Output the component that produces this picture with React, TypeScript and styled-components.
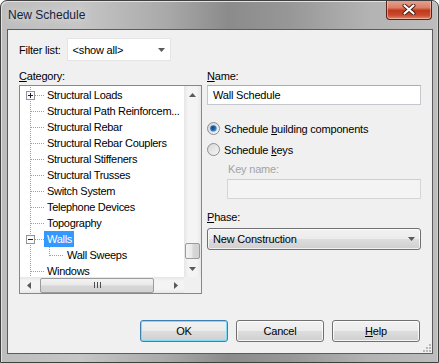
import React from 'react';
import styled, { createGlobalStyle, css } from 'styled-components';

const GlobalStyle = createGlobalStyle`
  html, body {
    margin: 0;
    padding: 0;
    background: #ffffff;
  }
  body {
    font-family: "Liberation Sans", Arial, sans-serif;
    font-size: 11px;
    letter-spacing: -0.2px;
    color: #000;
  }
`;

const Window = styled.div`
  width: 439px;
  height: 363px;
  box-sizing: border-box;
  border: 1px solid #404040;
  border-radius: 7px 7px 0 0;
  background: linear-gradient(
    90deg,
    #bdbdbd 0%,
    #c6c6c6 18%,
    #a9a9a9 38%,
    #8b8b8b 52%,
    #979797 66%,
    #b3b3b3 84%,
    #bdbdbd 100%
  );
  box-shadow: inset 1px 1px 0 #e2e2e2, inset -1px 0 0 #d0d0d0;
  display: flex;
  flex-direction: column;
  overflow: hidden;
`;

const TitleBar = styled.div`
  height: 28px;
  flex: none;
  display: flex;
  align-items: flex-start;
  padding-left: 7px;
`;

const Title = styled.div`
  font-size: 12px;
  line-height: 14px;
  letter-spacing: 0;
  margin-top: 7px;
  color: #14233d;
  text-shadow: 0 0 8px rgba(255, 255, 255, 0.8);
`;

const CloseButton = styled.div`
  margin-left: auto;
  margin-right: 6px;
  margin-top: -1px;
  width: 46px;
  height: 20px;
  box-sizing: border-box;
  border: 1px solid #5a2318;
  border-top: none;
  border-radius: 0 0 4px 4px;
  background: linear-gradient(180deg, #e9a595 0%, #d98066 40%, #c0391f 55%, #c94a2c 80%, #e0896b 100%);
  box-shadow: inset 0 0 0 1px rgba(255, 220, 210, 0.5);
  display: flex;
  align-items: center;
  justify-content: center;
`;

const Client = styled.div`
  flex: 1;
  margin: 0 5px 8px 6px;
  border: 1px solid #5c5c5c;
  background: #f0f0f0;
  display: flex;
  flex-direction: column;
  padding: 8px 11px 11px 11px;
  position: relative;
`;

const FilterRow = styled.div`
  display: flex;
  align-items: center;
  gap: 6px;
  height: 23px;
`;

const FilterSelect = styled.div`
  width: 104px;
  height: 23px;
  box-sizing: border-box;
  background: #ffffff;
  border: 1px solid #e4e4e4;
  display: flex;
  align-items: center;
  justify-content: space-between;
  padding: 0 5px 0 5px;
`;

const Main = styled.div`
  display: grid;
  grid-template-columns: 183px 214px;
  column-gap: 5px;
  margin-top: 7px;
`;

const Column = styled.div`
  display: flex;
  flex-direction: column;
`;

const Label = styled.div<{ $disabled?: boolean; $indent?: number }>`
  height: 17px;
  line-height: 17px;
  white-space: nowrap;
  color: ${(p) => (p.$disabled ? '#a3a3a3' : '#000')};
  padding-left: ${(p) => p.$indent ?? 0}px;
`;

const ListBox = styled.div`
  height: 209px;
  box-sizing: border-box;
  border: 1px solid #828790;
  background: #ffffff;
  display: grid;
  grid-template-columns: 1fr 17px;
  grid-template-rows: 1fr 16px;
`;

const Tree = styled.div`
  padding-top: 1px;
  overflow: hidden;
  letter-spacing: -0.3px;
`;

const TreeRow = styled.div`
  display: flex;
  align-items: center;
  height: 16px;
  white-space: nowrap;
`;

const ItemText = styled.span<{ $selected?: boolean }>`
  height: 16px;
  line-height: 16px;
  padding: 0 2px 0 3px;
  ${(p) =>
    p.$selected &&
    css`
      background: #3399ff;
      color: #ffffff;
    `}
`;

const VScroll = styled.div`
  display: flex;
  flex-direction: column;
  background: linear-gradient(90deg, #e6e6e6 0%, #f4f4f4 25%, #f4f4f4 75%, #e8e8e8 100%);
`;

const HScroll = styled.div`
  display: flex;
  background: linear-gradient(180deg, #e6e6e6 0%, #f4f4f4 25%, #f4f4f4 75%, #e8e8e8 100%);
`;

const ScrollCorner = styled.div`
  background: #f0f0f0;
`;

const ArrowButton = styled.div<{ $horizontal?: boolean }>`
  flex: none;
  ${(p) => (p.$horizontal ? 'width: 17px;' : 'height: 17px;')}
  display: flex;
  align-items: center;
  justify-content: center;
`;

const Track = styled.div<{ $horizontal?: boolean }>`
  flex: 1;
  display: flex;
  flex-direction: ${(p) => (p.$horizontal ? 'row' : 'column')};
`;

const Thumb = styled.div<{ $horizontal?: boolean; $offset: number; $size: number }>`
  box-sizing: border-box;
  border: 1px solid #9b9b9b;
  border-radius: 2px;
  display: flex;
  align-items: center;
  justify-content: center;
  ${(p) =>
    p.$horizontal
      ? css`
          margin: 0 0 0 ${p.$offset}px;
          width: ${p.$size}px;
          height: 15px;
          align-self: center;
          background: linear-gradient(180deg, #f3f3f3 0%, #e9e9e9 45%, #d6d6d6 55%, #d2d2d2 100%);
        `
      : css`
          margin: ${p.$offset}px 0 0 1px;
          height: ${p.$size}px;
          width: 15px;
          background: linear-gradient(90deg, #f3f3f3 0%, #e9e9e9 45%, #d6d6d6 55%, #d2d2d2 100%);
        `}
`;

const TextBox = styled.div<{ $disabled?: boolean; $indent?: number }>`
  height: 20px;
  box-sizing: border-box;
  margin-left: ${(p) => p.$indent ?? 0}px;
  border: 1px solid ${(p) => (p.$disabled ? '#d5d5d5' : '#c5c7cc')};
  border-top-color: ${(p) => (p.$disabled ? '#cfcfcf' : '#abadb3')};
  background: ${(p) => (p.$disabled ? '#f4f4f4' : '#ffffff')};
  padding-left: 5px;
  line-height: 18px;
`;

const RadioRow = styled.div<{ $gap: number }>`
  display: flex;
  align-items: center;
  gap: 4px;
  height: 17px;
  margin-top: ${(p) => p.$gap}px;
`;

const ComboBox = styled.div`
  height: 22px;
  box-sizing: border-box;
  border: 1px solid #707070;
  border-radius: 3px;
  background: linear-gradient(180deg, #f2f2f2 0%, #ebebeb 50%, #dddddd 51%, #cfcfcf 100%);
  box-shadow: inset 0 0 0 1px rgba(255, 255, 255, 0.7);
  display: flex;
  align-items: center;
  justify-content: space-between;
  padding: 0 5px 0 5px;
`;

const Spacer = styled.div<{ $h: number }>`
  height: ${(p) => p.$h}px;
  flex: none;
`;

const Footer = styled.div`
  margin-top: auto;
  display: flex;
  justify-content: flex-end;
  gap: 8px;
  padding-right: 1px;
`;

const Button = styled.div<{ $default?: boolean }>`
  width: 88px;
  height: 22px;
  box-sizing: border-box;
  border: 1px solid ${(p) => (p.$default ? '#3c7fb1' : '#707070')};
  border-radius: 3px;
  background: linear-gradient(180deg, #f2f2f2 0%, #ebebeb 50%, #dddddd 51%, #cfcfcf 100%);
  box-shadow: inset 0 0 0 1px ${(p) => (p.$default ? '#7fdcf9' : 'rgba(255, 255, 255, 0.8)')};
  display: flex;
  align-items: center;
  justify-content: center;
`;

const Grip = styled.div`
  position: absolute;
  right: 1px;
  bottom: 1px;
  width: 10px;
  height: 10px;
`;

type Expander = 'plus' | 'minus' | undefined;

const Dotted = ({ x1, y1, x2, y2 }: { x1: number; y1: number; x2: number; y2: number }) => (
  <line x1={x1} y1={y1} x2={x2} y2={y2} stroke="#a0a0a0" strokeDasharray="1 1" shapeRendering="crispEdges" />
);

const Guide = ({ level, expander }: { level: number; expander?: Expander }) => (
  <svg width={level === 0 ? 24 : 44} height={16} style={{ flex: 'none' }}>
    <Dotted x1={10.5} y1={0} x2={10.5} y2={16} />
    {level === 0 && <Dotted x1={expander ? 15 : 11} y1={8.5} x2={24} y2={8.5} />}
    {level === 1 && (
      <>
        <Dotted x1={29.5} y1={0} x2={29.5} y2={9} />
        <Dotted x1={30} y1={8.5} x2={44} y2={8.5} />
      </>
    )}
    {expander && (
      <>
        <rect x={6.5} y={4.5} width={8} height={8} fill="#fbfbfb" stroke="#949494" shapeRendering="crispEdges" />
        <line x1={8} y1={8.5} x2={13} y2={8.5} stroke="#1c1c3c" shapeRendering="crispEdges" />
        {expander === 'plus' && <line x1={10.5} y1={6} x2={10.5} y2={11} stroke="#1c1c3c" shapeRendering="crispEdges" />}
      </>
    )}
  </svg>
);

const Arrow = ({ dir }: { dir: 'up' | 'down' | 'left' | 'right' }) => {
  const pts = {
    up: '0,4 3.5,0 7,4',
    down: '0,0 3.5,4 7,0',
    left: '4,0 0,3.5 4,7',
    right: '0,0 4,3.5 0,7',
  }[dir];
  const horiz = dir === 'left' || dir === 'right';
  return (
    <svg width={horiz ? 4 : 7} height={horiz ? 7 : 4}>
      <polygon points={pts} fill="#5a5a5a" />
    </svg>
  );
};

const Radio = ({ checked }: { checked?: boolean }) => (
  <svg width={13} height={13} style={{ flex: 'none' }}>
    <defs>
      <linearGradient id={checked ? 'rg1' : 'rg0'} x1="0" y1="0" x2="1" y2="1">
        <stop offset="0" stopColor="#d4d4d4" />
        <stop offset="1" stopColor="#f8f8f8" />
      </linearGradient>
      <radialGradient id="dot" cx="0.4" cy="0.4" r="0.7">
        <stop offset="0" stopColor="#0e3f75" />
        <stop offset="0.6" stopColor="#2a77c0" />
        <stop offset="1" stopColor="#7cc2ef" />
      </radialGradient>
    </defs>
    <circle cx={6.5} cy={6.5} r={6} fill={`url(#${checked ? 'rg1' : 'rg0'})`} stroke="#8e8f8f" />
    {checked && <circle cx={6.5} cy={6.5} r={3.3} fill="url(#dot)" />}
  </svg>
);

const items: { text: string; level: number; expander?: Expander; selected?: boolean }[] = [
  { text: 'Structural Loads', level: 0, expander: 'plus' },
  { text: 'Structural Path Reinforcem...', level: 0 },
  { text: 'Structural Rebar', level: 0 },
  { text: 'Structural Rebar Couplers', level: 0 },
  { text: 'Structural Stiffeners', level: 0 },
  { text: 'Structural Trusses', level: 0 },
  { text: 'Switch System', level: 0 },
  { text: 'Telephone Devices', level: 0 },
  { text: 'Topography', level: 0 },
  { text: 'Walls', level: 0, expander: 'minus', selected: true },
  { text: 'Wall Sweeps', level: 1 },
  { text: 'Windows', level: 0 },
];

export default function App() {
  return (
    <>
      <GlobalStyle />
      <Window>
        <TitleBar>
          <Title>New Schedule</Title>
          <CloseButton>
            <svg width={14} height={11}>
              <path d="M2.5 1.5 L11.5 9.5 M11.5 1.5 L2.5 9.5" stroke="#4a1a10" strokeWidth={4} strokeLinecap="round" />
              <path d="M2.5 1.5 L11.5 9.5 M11.5 1.5 L2.5 9.5" stroke="#ffffff" strokeWidth={2.2} strokeLinecap="round" />
            </svg>
          </CloseButton>
        </TitleBar>
        <Client>
          <FilterRow>
            <span>Filter list:</span>
            <FilterSelect>
              <span>&lt;show all&gt;</span>
              <Arrow dir="down" />
            </FilterSelect>
          </FilterRow>
          <Main>
            <Column>
              <Label>
                <u>C</u>ategory:
              </Label>
              <ListBox>
                <Tree>
                  {items.map((it) => (
                    <TreeRow key={it.text}>
                      <Guide level={it.level} expander={it.expander} />
                      <ItemText $selected={it.selected}>{it.text}</ItemText>
                    </TreeRow>
                  ))}
                </Tree>
                <VScroll>
                  <ArrowButton>
                    <Arrow dir="up" />
                  </ArrowButton>
                  <Track>
                    <Thumb $offset={140} $size={16} />
                  </Track>
                  <ArrowButton>
                    <Arrow dir="down" />
                  </ArrowButton>
                </VScroll>
                <HScroll>
                  <ArrowButton $horizontal>
                    <Arrow dir="left" />
                  </ArrowButton>
                  <Track $horizontal>
                    <Thumb $horizontal $offset={3} $size={114}>
                      <svg width={7} height={6}>
                        <path d="M0.5 0 V6 M3.5 0 V6 M6.5 0 V6" stroke="#4d4d4d" />
                      </svg>
                    </Thumb>
                  </Track>
                  <ArrowButton $horizontal>
                    <Arrow dir="right" />
                  </ArrowButton>
                </HScroll>
                <ScrollCorner />
              </ListBox>
            </Column>
            <Column>
              <Label>
                <u>N</u>ame:
              </Label>
              <TextBox>Wall Schedule</TextBox>
              <RadioRow $gap={15}>
                <Radio checked />
                <span>
                  Schedule <u>b</u>uilding components
                </span>
              </RadioRow>
              <RadioRow $gap={4}>
                <Radio />
                <span>
                  Schedule <u>k</u>eys
                </span>
              </RadioRow>
              <Spacer $h={3} />
              <Label $disabled $indent={21}>
                Key name:
              </Label>
              <Spacer $h={1} />
              <TextBox $disabled $indent={20} />
              <Spacer $h={10} />
              <Label>
                <u>P</u>hase:
              </Label>
              <Spacer $h={2} />
              <ComboBox>
                <span>New Construction</span>
                <Arrow dir="down" />
              </ComboBox>
            </Column>
          </Main>
          <Footer>
            <Button $default>OK</Button>
            <Button>Cancel</Button>
            <Button>
              <span>
                <u>H</u>elp
              </span>
            </Button>
          </Footer>
          <Grip>
            <svg width={10} height={10}>
              {[
                [8, 2],
                [8, 5],
                [5, 5],
                [8, 8],
                [5, 8],
                [2, 8],
              ].map(([x, y]) => (
                <rect key={`${x}-${y}`} x={x} y={y} width={2} height={2} fill="#b8b8b8" />
              ))}
            </svg>
          </Grip>
        </Client>
      </Window>
    </>
  );
}
